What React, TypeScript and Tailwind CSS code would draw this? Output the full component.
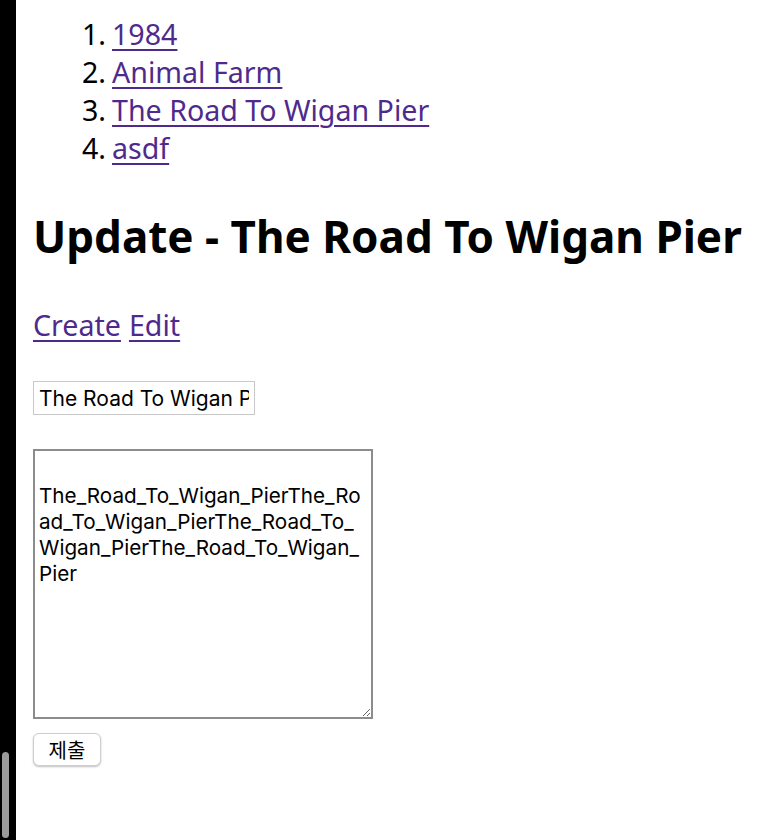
import React from "react";

const books = ["1984", "Animal Farm", "The Road To Wigan Pier", "asdf"];

export default function App() {
  return (
    <div className="flex h-[840px] w-[782px] overflow-hidden bg-white">
      <div className="relative w-[16px] shrink-0 bg-black">
        <div className="absolute left-[2px] top-[752px] h-[86px] w-[7px] rounded-full bg-[#9a9a9a]" />
      </div>
      <div className="flex flex-col pl-[17px] pt-[15px] text-black" style={{ fontFamily: '"Noto Sans", sans-serif' }}>
        <ol className="flex flex-col text-[28.6px] leading-[38px]">
          {books.map((b, i) => (
            <li key={b} className="flex">
              <span className="w-[73px] text-right">{i + 1}.</span>
              <a href="#" className="ml-[6px] text-[#4f2a8c] underline decoration-[2px] underline-offset-[4px]">{b}</a>
            </li>
          ))}
        </ol>
        <h1 className="mt-[42px] text-[44px] font-bold leading-[54px]">Update - The Road To Wigan Pier</h1>
        <div className="mt-[43px] flex gap-[8px] text-[28.6px] leading-[38px]">
          <a href="#" className="text-[#4f2a8c] underline decoration-[2px] underline-offset-[4px]">Create</a>
          <a href="#" className="text-[#4f2a8c] underline decoration-[2px] underline-offset-[4px]">Edit</a>
        </div>
        <input
          readOnly
          value="The Road To Wigan Pier"
          className="mt-[37px] h-[34px] w-[222px] border border-[#c8c8c8] px-[5px] text-[21px] text-black outline-none"
          style={{ fontFamily: 'Inter, "Liberation Sans", sans-serif' }}
        />
        <textarea
          readOnly
          value={"\nThe_Road_To_Wigan_PierThe_Ro\nad_To_Wigan_PierThe_Road_To_\nWigan_PierThe_Road_To_Wigan_\nPier"}
          className="mt-[34px] h-[270px] w-[340px] resize border-2 border-[#8c8c8c] px-[4px] pb-[4px] pt-[6px] text-[20.7px] leading-[26px] text-black outline-none"
          style={{ fontFamily: 'Inter, "Liberation Sans", sans-serif' }}
        />
        <div className="mt-[14px]">
          <button
            className="h-[33px] w-[68px] rounded-[6px] border border-[#cfcfcf] bg-white text-[20px] text-black shadow-[0_1px_2px_rgba(0,0,0,0.25)]"
            style={{ fontFamily: '"Noto Sans CJK KR", sans-serif' }}
          >
            제출
          </button>
        </div>
      </div>
    </div>
  );
}
